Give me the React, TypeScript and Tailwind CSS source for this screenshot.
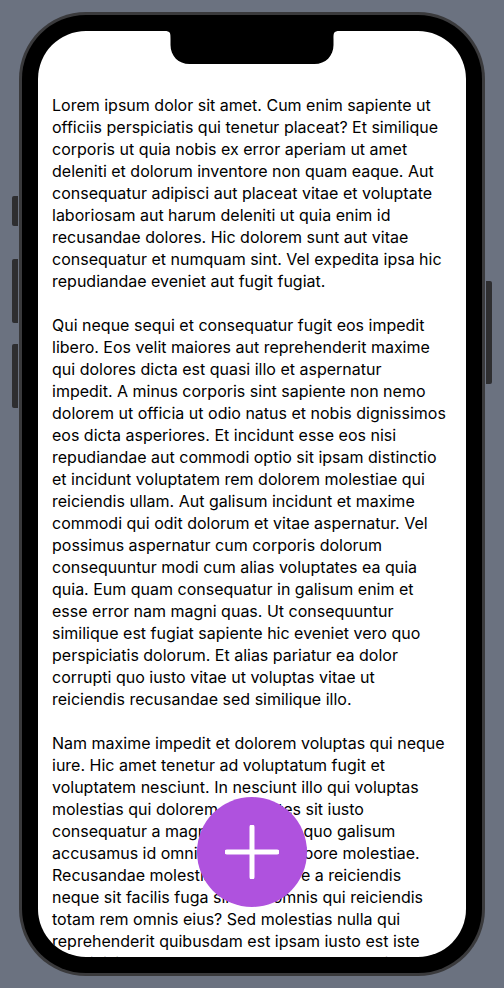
import React from "react";

const paragraphs: string[][] = [
  [
    "Lorem ipsum dolor sit amet. Cum enim sapiente ut",
    "officiis perspiciatis qui tenetur placeat? Et similique",
    "corporis ut quia nobis ex error aperiam ut amet",
    "deleniti et dolorum inventore non quam eaque. Aut",
    "consequatur adipisci aut placeat vitae et voluptate",
    "laboriosam aut harum deleniti ut quia enim id",
    "recusandae dolores. Hic dolorem sunt aut vitae",
    "consequatur et numquam sint. Vel expedita ipsa hic",
    "repudiandae eveniet aut fugit fugiat.",
  ],
  [
    "Qui neque sequi et consequatur fugit eos impedit",
    "libero. Eos velit maiores aut reprehenderit maxime",
    "qui dolores dicta est quasi illo et aspernatur",
    "impedit. A minus corporis sint sapiente non nemo",
    "dolorem ut officia ut odio natus et nobis dignissimos",
    "eos dicta asperiores. Et incidunt esse eos nisi",
    "repudiandae aut commodi optio sit ipsam distinctio",
    "et incidunt voluptatem rem dolorem molestiae qui",
    "reiciendis ullam. Aut galisum incidunt et maxime",
    "commodi qui odit dolorum et vitae aspernatur. Vel",
    "possimus aspernatur cum corporis dolorum",
    "consequuntur modi cum alias voluptates ea quia",
    "quia. Eum quam consequatur in galisum enim et",
    "esse error nam magni quas. Ut consequuntur",
    "similique est fugiat sapiente hic eveniet vero quo",
    "perspiciatis dolorum. Et alias pariatur ea dolor",
    "corrupti quo iusto vitae ut voluptas vitae ut",
    "reiciendis recusandae sed similique illo.",
  ],
  [
    "Nam maxime impedit et dolorem voluptas qui neque",
    "iure. Hic amet tenetur ad voluptatum fugit et",
    "voluptatem nesciunt. In nesciunt illo qui voluptas",
    "molestias qui dolorem voluptates sit iusto",
    "consequatur a magnam nesciunt quo galisum",
    "accusamus id omnis dolores et labore molestiae.",
    "Recusandae molestiae et quis iure a reiciendis",
    "neque sit facilis fuga sint aut omnis qui reiciendis",
    "totam rem omnis eius? Sed molestias nulla qui",
    "reprehenderit quibusdam est ipsam iusto est iste",
    "aut nihil illo voluptatem sunt rerum accusantium. Et",
    "quia dolorem ut quia galisum sit voluptas dolores.",
  ],
];

export default function App() {
  return (
    <div className="flex h-[988px] w-full items-center justify-center bg-[#6b7280]">
      <div className="relative h-[964px] w-[466px]">
        {/* side buttons */}
        <div className="absolute left-[-7px] top-[184px] h-[30px] w-[6px] rounded-l-[2px] bg-[#2e2e30]" />
        <div className="absolute left-[-7px] top-[247px] h-[64px] w-[6px] rounded-l-[2px] bg-[#2e2e30]" />
        <div className="absolute left-[-7px] top-[332px] h-[64px] w-[6px] rounded-l-[2px] bg-[#2e2e30]" />
        <div className="absolute right-[-7px] top-[269px] h-[103px] w-[6px] rounded-r-[2px] bg-[#2e2e30]" />

        <div className="h-full w-full rounded-[67px] bg-[#3a3a3c] p-[3px]">
          <div className="h-full w-full rounded-[64px] bg-black p-[16px]">
            <div className="relative h-full w-full overflow-hidden rounded-[48px] bg-white">
              <div
                className="flex flex-col gap-[22px] px-[14px] pt-[63px] text-[16px] leading-[22px] text-black"
                style={{ fontFamily: "Inter, 'Noto Sans', sans-serif" }}
              >
                {paragraphs.map((lines, i) => (
                  <p key={i} className="whitespace-nowrap">
                    {lines.map((l, j) => (
                      <React.Fragment key={j}>
                        {l}
                        {j < lines.length - 1 && <br />}
                      </React.Fragment>
                    ))}
                  </p>
                ))}
              </div>

              {/* notch */}
              <svg
                className="absolute left-1/2 top-0 -translate-x-1/2"
                width="175"
                height="34"
                viewBox="0 0 175 34"
              >
                <path
                  d="M0 0 H175 C169 0 169 2 169 8 V14 C169 25 161 33 150 33 H25 C14 33 6 25 6 14 V8 C6 2 6 0 0 0 Z"
                  fill="#000"
                />
              </svg>

              {/* FAB */}
              <button className="absolute bottom-[50px] left-1/2 flex h-[110px] w-[110px] -translate-x-1/2 items-center justify-center rounded-full bg-[#af52de]">
                <svg width="54" height="54" viewBox="0 0 54 54">
                  <path d="M27 2 V52 M2 27 H52" stroke="#fff" strokeWidth="5" strokeLinecap="round" fill="none" />
                </svg>
              </button>
            </div>
          </div>
        </div>
      </div>
    </div>
  );
}
